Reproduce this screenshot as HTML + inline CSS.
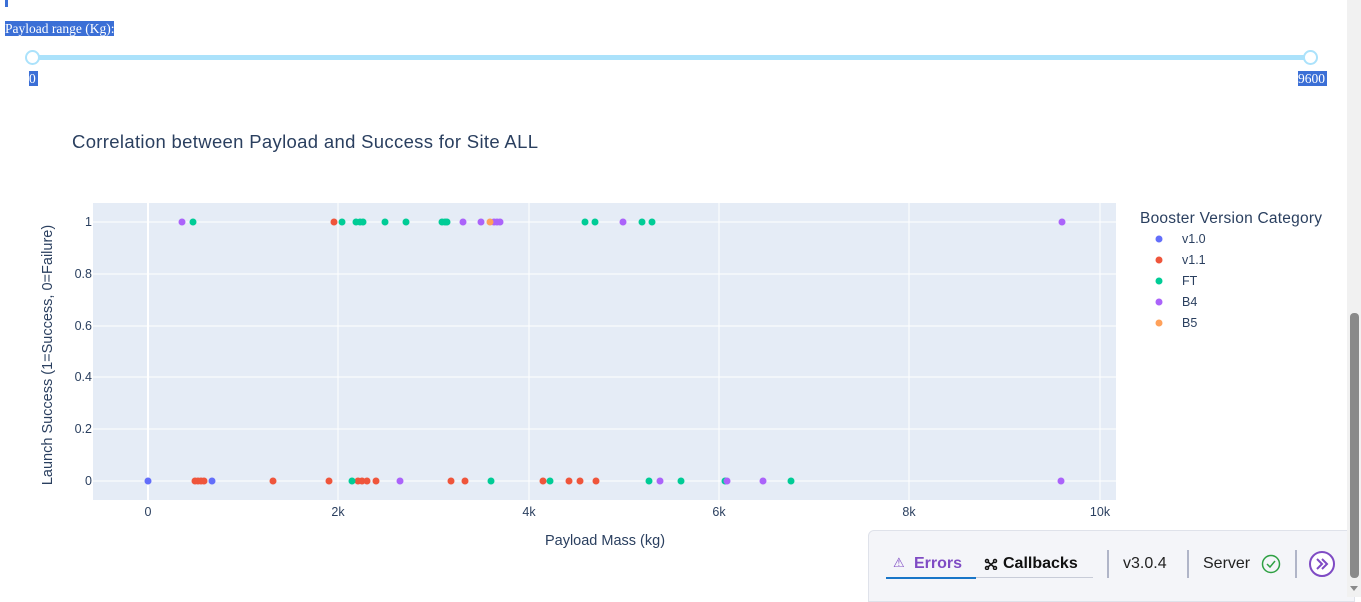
<!DOCTYPE html>
<html><head><meta charset="utf-8"><style>
body{margin:0;width:1361px;height:597px;overflow:hidden;background:#fff;font-family:"Liberation Sans",sans-serif;position:relative}
.sel{background:#3b6fd6;color:#fff;font-family:"Liberation Serif",serif;font-size:13.5px;position:absolute;line-height:15px}
</style></head><body>
<div style="position:absolute;left:5px;top:0;width:3px;height:7px;background:#3b6fd6"></div>
<div class="sel" style="left:5px;top:21px">Payload range (Kg):</div>
<div style="position:absolute;left:32px;top:55px;width:1279px;height:5px;background:#abe2fb"></div>
<div style="position:absolute;left:25px;top:50px;width:11px;height:11px;border:2px solid #abe2fb;border-radius:50%;background:#fff"></div>
<div style="position:absolute;left:1303px;top:50px;width:11px;height:11px;border:2px solid #abe2fb;border-radius:50%;background:#fff"></div>
<div class="sel" style="left:29px;top:71px;height:15px;width:9px">0</div>
<div class="sel" style="left:1298px;top:71px;height:15px;width:29px">9600</div>
<svg width="1361" height="597" style="position:absolute;left:0;top:0" font-family="Liberation Sans,sans-serif">
<text x="72" y="148" font-size="18.5" fill="#2a3f5f" textLength="466" lengthAdjust="spacing">Correlation between Payload and Success for Site ALL</text>
<rect x="93" y="203" width="1023" height="297" fill="#e5ecf6"/>
<g stroke="#fff" stroke-width="1">
<line x1="338" y1="203" x2="338" y2="500"/><line x1="529" y1="203" x2="529" y2="500"/><line x1="719" y1="203" x2="719" y2="500"/><line x1="909" y1="203" x2="909" y2="500"/><line x1="1100" y1="203" x2="1100" y2="500"/>
<line x1="93" y1="222" x2="1116" y2="222"/><line x1="93" y1="274" x2="1116" y2="274"/><line x1="93" y1="326" x2="1116" y2="326"/><line x1="93" y1="377" x2="1116" y2="377"/><line x1="93" y1="429" x2="1116" y2="429"/><line x1="93" y1="481" x2="1116" y2="481"/>
</g>
<line x1="148" y1="203" x2="148" y2="500" stroke="#fff" stroke-width="2"/>
<g font-size="12.5" fill="#2a3f5f" text-anchor="end">
<text x="92" y="226">1</text><text x="92" y="278">0.8</text><text x="92" y="330">0.6</text><text x="92" y="381">0.4</text><text x="92" y="433">0.2</text><text x="92" y="485">0</text></g>
<g font-size="12.5" fill="#2a3f5f" text-anchor="middle">
<text x="148" y="516">0</text><text x="338" y="516">2k</text><text x="529" y="516">4k</text><text x="719" y="516">6k</text><text x="909" y="516">8k</text><text x="1100" y="516">10k</text></g>
<text x="605" y="545" font-size="14.5" fill="#2a3f5f" text-anchor="middle">Payload Mass (kg)</text>
<text transform="translate(52,355) rotate(-90)" font-size="14.5" fill="#2a3f5f" text-anchor="middle">Launch Success (1=Success, 0=Failure)</text>
<g>
<g fill="#636efa"><circle cx="148" cy="481" r="3.5"/><circle cx="212" cy="481" r="3.5"/></g>
<g fill="#EF553B"><circle cx="334" cy="222" r="3.5"/><circle cx="195" cy="481" r="3.5"/><circle cx="198" cy="481" r="3.5"/><circle cx="201" cy="481" r="3.5"/><circle cx="204" cy="481" r="3.5"/><circle cx="273" cy="481" r="3.5"/><circle cx="329" cy="481" r="3.5"/><circle cx="358" cy="481" r="3.5"/><circle cx="362" cy="481" r="3.5"/><circle cx="367" cy="481" r="3.5"/><circle cx="376" cy="481" r="3.5"/><circle cx="451" cy="481" r="3.5"/><circle cx="465" cy="481" r="3.5"/><circle cx="543" cy="481" r="3.5"/><circle cx="569" cy="481" r="3.5"/><circle cx="580" cy="481" r="3.5"/><circle cx="596" cy="481" r="3.5"/></g>
<g fill="#00cc96"><circle cx="193" cy="222" r="3.5"/><circle cx="342" cy="222" r="3.5"/><circle cx="356" cy="222" r="3.5"/><circle cx="360" cy="222" r="3.5"/><circle cx="363" cy="222" r="3.5"/><circle cx="385" cy="222" r="3.5"/><circle cx="406" cy="222" r="3.5"/><circle cx="442" cy="222" r="3.5"/><circle cx="445" cy="222" r="3.5"/><circle cx="447" cy="222" r="3.5"/><circle cx="585" cy="222" r="3.5"/><circle cx="595" cy="222" r="3.5"/><circle cx="642" cy="222" r="3.5"/><circle cx="652" cy="222" r="3.5"/><circle cx="352" cy="481" r="3.5"/><circle cx="491" cy="481" r="3.5"/><circle cx="550" cy="481" r="3.5"/><circle cx="649" cy="481" r="3.5"/><circle cx="681" cy="481" r="3.5"/><circle cx="725" cy="481" r="3.5"/><circle cx="791" cy="481" r="3.5"/></g>
<g fill="#ab63fa"><circle cx="182" cy="222" r="3.5"/><circle cx="463" cy="222" r="3.5"/><circle cx="481" cy="222" r="3.5"/><circle cx="494" cy="222" r="3.5"/><circle cx="497" cy="222" r="3.5"/><circle cx="500" cy="222" r="3.5"/><circle cx="623" cy="222" r="3.5"/><circle cx="1062" cy="222" r="3.5"/><circle cx="400" cy="481" r="3.5"/><circle cx="660" cy="481" r="3.5"/><circle cx="727" cy="481" r="3.5"/><circle cx="763" cy="481" r="3.5"/><circle cx="1061" cy="481" r="3.5"/></g>
<circle cx="490" cy="222" r="3.5" fill="#FFA15A"/>
</g>
<text x="1140" y="223" font-size="15.5" fill="#2a3f5f" textLength="182" lengthAdjust="spacing">Booster Version Category</text>
<g font-size="12.5" fill="#2a3f5f">
<circle cx="1159" cy="239" r="3.5" fill="#636efa"/><text x="1182" y="243">v1.0</text>
<circle cx="1159" cy="260" r="3.5" fill="#EF553B"/><text x="1182" y="264">v1.1</text>
<circle cx="1159" cy="281" r="3.5" fill="#00cc96"/><text x="1182" y="285">FT</text>
<circle cx="1159" cy="302" r="3.5" fill="#ab63fa"/><text x="1182" y="306">B4</text>
<circle cx="1159" cy="323" r="3.5" fill="#FFA15A"/><text x="1182" y="327">B5</text>
</g>
</svg>
<div style="position:absolute;left:868px;top:530px;width:485px;height:70px;background:#f4f5f9;border:1px solid #dfe2ea;border-radius:6px 0 0 0"></div>
<div style="position:absolute;left:893px;top:556px;font-size:13px;color:#7f4bc4;font-family:'DejaVu Sans',sans-serif">⚠</div>
<div style="position:absolute;left:914px;top:555px;font-size:16px;font-weight:bold;color:#7f4bc4">Errors</div>
<div style="position:absolute;left:886px;top:577px;width:90px;height:2px;background:#1976c8"></div>
<div style="position:absolute;left:976px;top:577px;width:117px;height:1px;background:#c8ccd8"></div>
<svg style="position:absolute;left:984px;top:558px" width="14" height="12"><g stroke="#111" stroke-width="1.5" fill="none"><circle cx="3" cy="3" r="1.5"/><circle cx="11" cy="3" r="1.5"/><circle cx="3" cy="10" r="1.5"/><circle cx="11" cy="10" r="1.5"/><path d="M4 4l6 5M10 4l-6 5"/></g></svg>
<div style="position:absolute;left:1003px;top:555px;font-size:16px;font-weight:bold;color:#111">Callbacks</div>
<div style="position:absolute;left:1107px;top:550px;width:2px;height:28px;background:#b0b5c8"></div>
<div style="position:absolute;left:1123px;top:555px;font-size:16px;color:#222">v3.0.4</div>
<div style="position:absolute;left:1187px;top:550px;width:2px;height:28px;background:#b0b5c8"></div>
<div style="position:absolute;left:1203px;top:555px;font-size:16px;color:#222">Server</div>
<svg style="position:absolute;left:1261px;top:554px" width="20" height="20"><circle cx="10" cy="10" r="8.5" fill="none" stroke="#2ea043" stroke-width="1.5"/><path d="M6 10l3 3 5-6" fill="none" stroke="#2ea043" stroke-width="1.5"/></svg>
<div style="position:absolute;left:1295px;top:550px;width:2px;height:28px;background:#b0b5c8"></div>
<svg style="position:absolute;left:1308px;top:550px" width="28" height="28"><circle cx="14" cy="14" r="12" fill="#fff" stroke="#7f4bc4" stroke-width="2"/><path d="M9 9l5 5-5 5M14 9l5 5-5 5" fill="none" stroke="#7f4bc4" stroke-width="2"/></svg>
<div style="position:absolute;left:1347px;top:0;width:14px;height:597px;background:#f1f1f1"></div>
<div style="position:absolute;left:1350px;top:313px;width:9px;height:265px;background:#8a8a8a;border-radius:4px"></div>
<div style="position:absolute;left:1350px;top:586px;width:0;height:0;border-left:4px solid transparent;border-right:4px solid transparent;border-top:5px solid #8a8a8a"></div>
</body></html>
